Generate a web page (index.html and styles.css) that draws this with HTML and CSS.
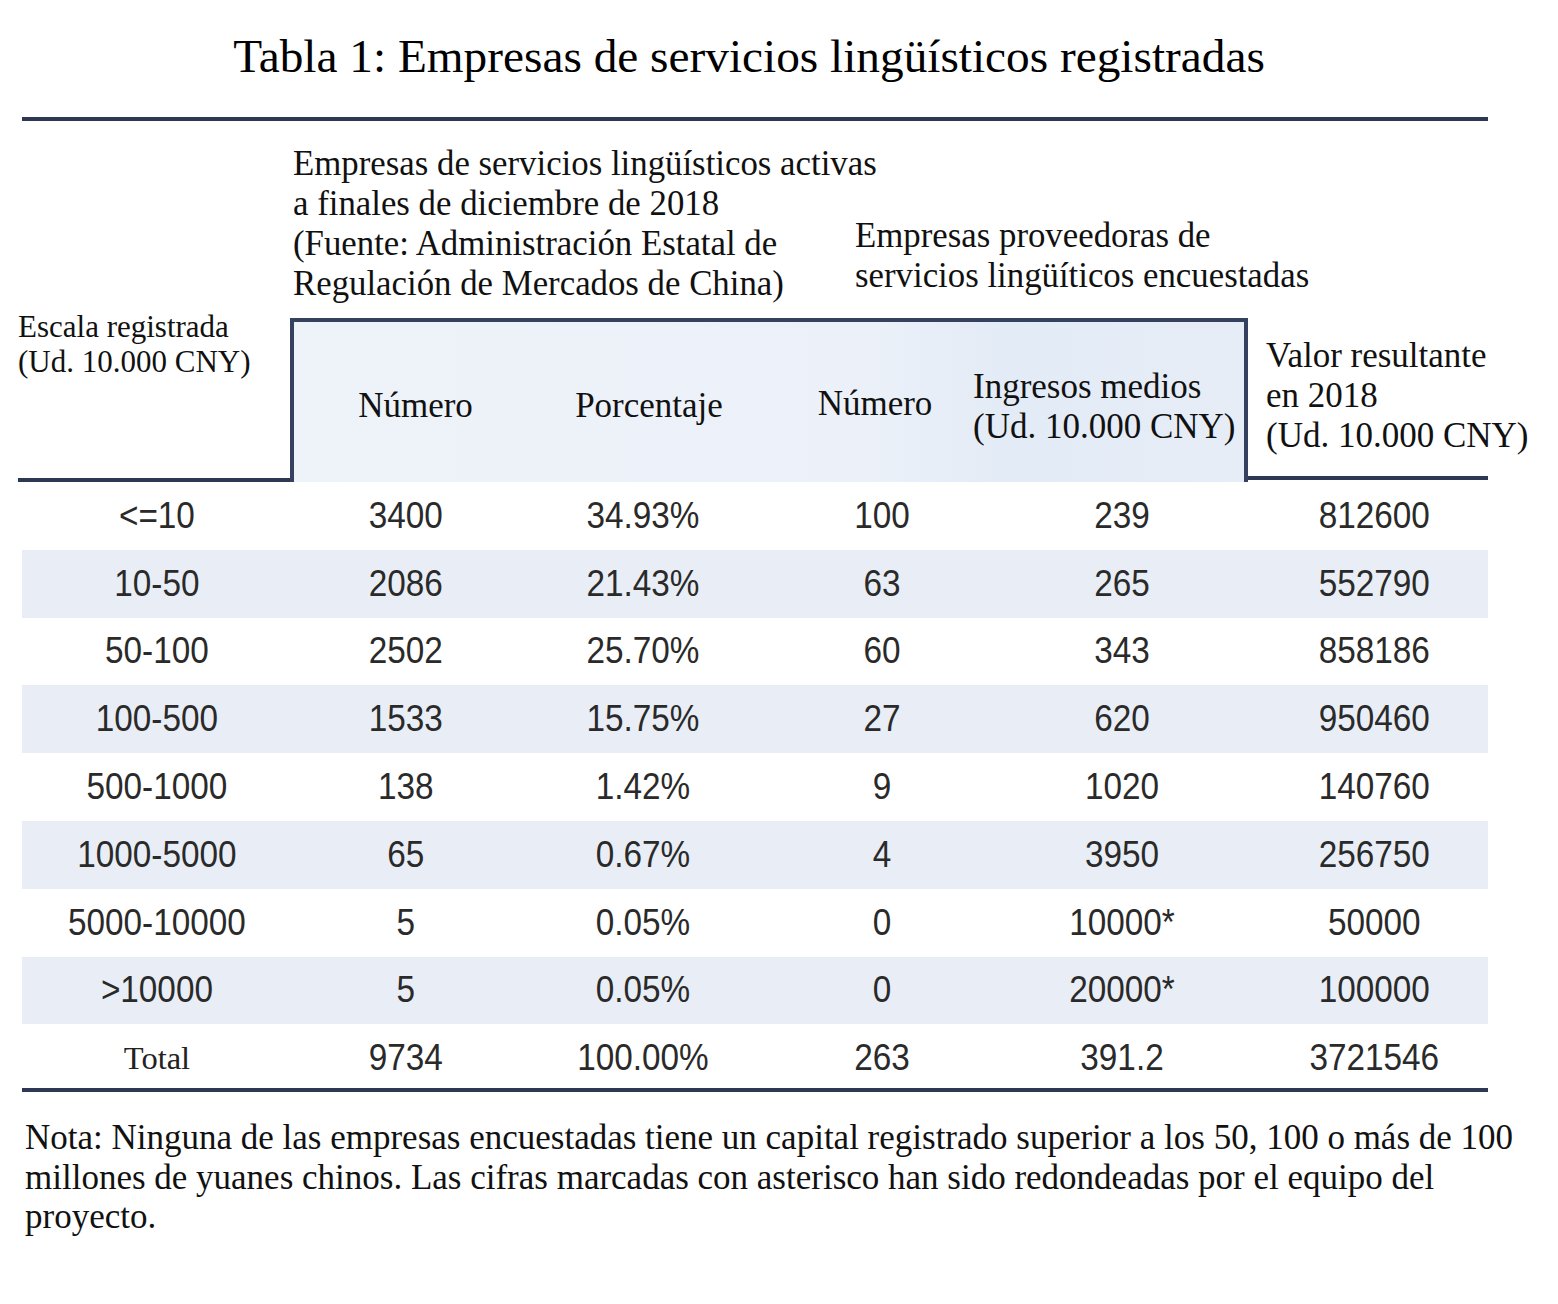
FILE: index.html
```html
<!DOCTYPE html>
<html lang="es">
<head>
<meta charset="utf-8">
<title>Tabla 1</title>
<link rel="stylesheet" href="styles.css">
</head>
<body>
<div class="page">
  <h1 class="title">Tabla 1: Empresas de servicios lingüísticos registradas</h1>
  <div class="table">
    <div class="rule"></div>
    <div class="groups">
      <div class="group g1">Empresas de servicios lingüísticos activas<br>a finales de diciembre de 2018<br>(Fuente: Administración Estatal de<br>Regulación de Mercados de China)</div>
      <div class="group g2">Empresas proveedoras de<br>servicios lingüíticos encuestadas</div>
    </div>
    <div class="head">
      <div class="h-scale">Escala registrada<br>(Ud. 10.000 CNY)</div>
      <div class="box">
        <div class="bh bh1">Número</div>
        <div class="bh bh2">Porcentaje</div>
        <div class="bh bh3">Número</div>
        <div class="bh bh4">Ingresos medios<br>(Ud. 10.000 CNY)</div>
      </div>
      <div class="h-value">Valor resultante<br>en 2018<br>(Ud. 10.000 CNY)</div>
    </div>
    <div class="row"><span class="c">&lt;=10</span><span class="c">3400</span><span class="c">34.93%</span><span class="c">100</span><span class="c">239</span><span class="c">812600</span></div>
    <div class="row alt"><span class="c">10-50</span><span class="c">2086</span><span class="c">21.43%</span><span class="c">63</span><span class="c">265</span><span class="c">552790</span></div>
    <div class="row"><span class="c">50-100</span><span class="c">2502</span><span class="c">25.70%</span><span class="c">60</span><span class="c">343</span><span class="c">858186</span></div>
    <div class="row alt"><span class="c">100-500</span><span class="c">1533</span><span class="c">15.75%</span><span class="c">27</span><span class="c">620</span><span class="c">950460</span></div>
    <div class="row"><span class="c">500-1000</span><span class="c">138</span><span class="c">1.42%</span><span class="c">9</span><span class="c">1020</span><span class="c">140760</span></div>
    <div class="row alt"><span class="c">1000-5000</span><span class="c">65</span><span class="c">0.67%</span><span class="c">4</span><span class="c">3950</span><span class="c">256750</span></div>
    <div class="row"><span class="c">5000-10000</span><span class="c">5</span><span class="c">0.05%</span><span class="c">0</span><span class="c">10000*</span><span class="c">50000</span></div>
    <div class="row alt"><span class="c">&gt;10000</span><span class="c">5</span><span class="c">0.05%</span><span class="c">0</span><span class="c">20000*</span><span class="c">100000</span></div>
    <div class="row last"><span class="c total">Total</span><span class="c">9734</span><span class="c">100.00%</span><span class="c">263</span><span class="c">391.2</span><span class="c">3721546</span></div>
    <div class="rule"></div>
  </div>
  <p class="note">Nota: Ninguna de las empresas encuestadas tiene un capital registrado superior a los 50, 100 o más de 100 millones de yuanes chinos. Las cifras marcadas con asterisco han sido redondeadas por el equipo del proyecto.</p>
</div>
</body>
</html>
```
FILE: styles.css
```css
* { box-sizing: border-box; }
html, body { margin: 0; padding: 0; background: #ffffff; }
body { font-family: "Liberation Serif", "Times New Roman", serif; color: #000; }

.page { width: 1558px; padding: 30px 0 0 22px; }

.title {
  margin: 0 0 35px 0;
  width: 1466px;
  padding-right: 12px;
  text-align: center;
  font-weight: normal;
  font-size: 47.3px;
  line-height: 52px;
  color: #000;
}

.table { width: 1466px; }

.rule { height: 4px; background: #2e3855; }

.groups {
  display: flex;
  align-items: flex-end;
  height: 197px;
  padding-left: 271px;
  padding-bottom: 14px;
}
.group { font-size: 34.8px; line-height: 40px; color: #111; white-space: nowrap; }
.g1 { width: 562px; }
.g2 { padding-bottom: 8px; }

.head {
  display: grid;
  grid-template-columns: 268px 958px 240px;
  height: 164px;
}
.h-scale {
  font-size: 31px;
  line-height: 35px;
  margin-top: -9px;
  margin-left: -4px;
  border-bottom: 4px solid #2e3855;
  color: #111;
  white-space: nowrap;
}
.box {
  border: 4px solid #36415f;
  border-bottom: none;
  background: linear-gradient(90deg, #eef3fa 0%, #ecf1f9 60%, #e3ebf6 75%, #e6edf7 100%);
  display: grid;
  grid-template-columns: 231px 244px 212px 263px;
  align-items: center;
  font-size: 35px;
  line-height: 40px;
  color: #111;
  padding-top: 8px;
}
.bh { text-align: center; white-space: nowrap; }
.bh1 { padding-left: 12px; }
.bh2 { padding-left: 4px; }
.bh3 { padding-left: 0; margin-top: -4px; }
.bh4 { text-align: left; margin-left: -8px; margin-top: 2px; }
.h-value {
  font-size: 35px;
  line-height: 40px;
  padding: 18px 0 0 18px;
  white-space: nowrap;
  border-bottom: 4px solid #2e3855;
  margin-bottom: 2px;
  color: #111;
}

.row {
  display: grid;
  grid-template-columns: 268px 228px 250px 228px 252px 240px;
  height: 67.8px;
  align-items: center;
}
.row.alt { background: #e9eef6; }
.row.last { height: 64px; padding-top: 4px; }
.c {
  display: block;
  text-align: center;
  font-family: "Liberation Sans", Arial, sans-serif;
  font-size: 37px;
  color: #2a2a2a;
  transform: scaleX(0.9);
}
.row .c:nth-child(1) { padding-left: 2px; }
.row .c:nth-child(2) { padding-left: 4px; }
.row .c:nth-child(6) { padding-left: 14px; }
.c.total {
  font-family: "Liberation Serif", "Times New Roman", serif;
  font-size: 32.5px;
  transform: none;
  color: #222;
}

.note {
  margin: 26px 0 0 3px;
  width: 1512px;
  font-size: 35px;
  line-height: 39.5px;
  color: #111;
}
```
